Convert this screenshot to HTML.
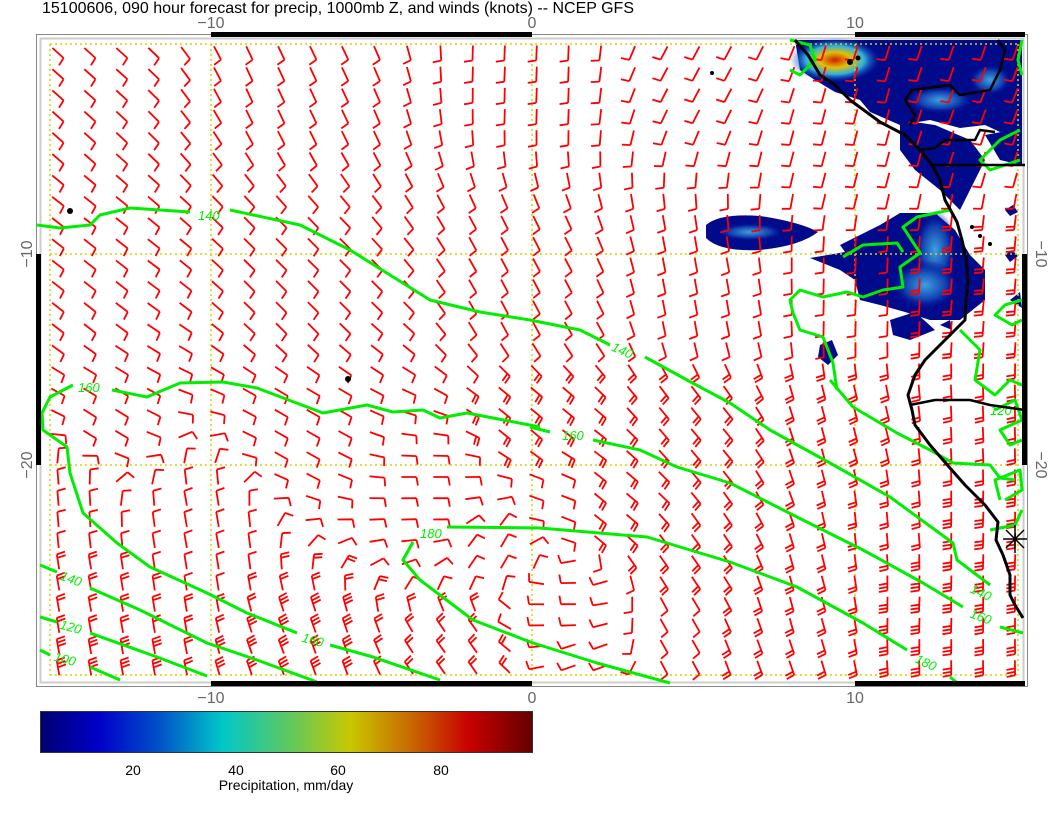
<!DOCTYPE html>
<html><head><meta charset="utf-8">
<style>
html,body{margin:0;padding:0;background:#fff;}
body{width:1056px;height:816px;overflow:hidden;position:relative;font-family:"Liberation Sans",sans-serif;}
svg{position:absolute;left:0;top:0;}
</style></head>
<body>
<svg id="s" width="1056" height="816" viewBox="0 0 1056 816" xmlns="http://www.w3.org/2000/svg">
<defs>
<linearGradient id="cb" x1="0" x2="1" y1="0" y2="0">
<stop offset="0" stop-color="#000070"/>
<stop offset="0.12" stop-color="#0000c8"/>
<stop offset="0.24" stop-color="#0050c8"/>
<stop offset="0.37" stop-color="#00c8c8"/>
<stop offset="0.5" stop-color="#5ac864"/>
<stop offset="0.63" stop-color="#c8c800"/>
<stop offset="0.76" stop-color="#c86400"/>
<stop offset="0.87" stop-color="#c80000"/>
<stop offset="1" stop-color="#640000"/>
</linearGradient>
<radialGradient id="hot" cx="0.5" cy="0.5" r="0.5">
<stop offset="0" stop-color="#d02000"/>
<stop offset="0.35" stop-color="#e0c000"/>
<stop offset="0.65" stop-color="#30b0e0"/>
<stop offset="1" stop-color="#1030b0" stop-opacity="0"/>
</radialGradient>
<radialGradient id="lb" cx="0.5" cy="0.5" r="0.5">
<stop offset="0" stop-color="#40a0e0"/>
<stop offset="0.6" stop-color="#1040b0"/>
<stop offset="1" stop-color="#000090" stop-opacity="0"/>
</radialGradient>
</defs>
<text x="42" y="13" font-size="16" fill="#000">15100606, 090 hour forecast for precip, 1000mb Z, and winds (knots) -- NCEP GFS</text>
<rect x="36.5" y="34.5" width="991" height="652" fill="none" stroke="#888" stroke-width="1"/>
<rect x="40.5" y="38.5" width="983" height="644" fill="none" stroke="#ccc" stroke-width="2"/>
<g id="precip">
<path d="M795 40 L1022 40 L1022 130 L1000 132 L985 125 L960 128 L930 120 L900 125 L870 112 L860 100 L835 92 L815 80 L800 70 Z" fill="#000a8a"/>
<path d="M900 120 L935 125 L970 140 L985 160 L975 180 L960 210 L940 190 L915 170 L900 150 Z" fill="#000a8a"/>
<path d="M985 135 L1022 128 L1022 165 L1000 160 Z" fill="#000a8a"/>
<ellipse cx="835" cy="60" rx="45" ry="22" fill="url(#hot)"/>
<ellipse cx="990" cy="80" rx="22" ry="16" fill="url(#lb)"/>
<ellipse cx="940" cy="100" rx="35" ry="14" fill="url(#lb)"/>
<path d="M706 225 Q720 213 760 216 Q800 222 818 232 Q800 246 760 250 Q720 252 706 238 Z" fill="#000a8a"/>
<ellipse cx="750" cy="232" rx="35" ry="9" fill="url(#lb)"/>
<path d="M840 245 L880 225 L900 213 L935 213 L955 230 L970 255 L985 270 L985 300 L960 320 L930 320 L905 312 L880 305 L860 300 L855 280 L840 270 L810 258 L845 252 Z" fill="#000a8a"/>
<ellipse cx="935" cy="250" rx="22" ry="40" fill="url(#lb)"/>
<ellipse cx="925" cy="285" rx="35" ry="25" fill="url(#lb)"/>
<path d="M890 320 L915 312 L935 330 L910 340 L893 335 Z" fill="#000a8a"/>
<path d="M820 345 L832 340 L838 355 L828 365 L818 357 Z" fill="#000a8a"/>
<path d="M1005 210 L1013 205 L1018 212 L1010 216 Z M1005 255 L1012 250 L1018 256 L1010 262 Z M1010 300 L1020 292 L1022 308 Z M940 325 L950 320 L952 330 Z" fill="#000a8a"/>
</g>
<g id="grid" stroke="#d8d000" stroke-width="1.5" stroke-dasharray="2,3" fill="none">
<path d="M50 44 H1018 M50 254 H1018 M50 465 H1018 M50 675 H1018 M50 44 V675 M211 44 V675 M532 44 V675 M855 44 V675 M1018 44 V675"/>
</g>
<g id="barbs" stroke="#ff0000" stroke-width="1.8" fill="none" stroke-linecap="butt"></g>
<g id="green" stroke="#00ee00" stroke-width="3" fill="none" stroke-linejoin="round">
<polyline points="37,225 60,228 90,225 100,215 130,208 190,212"/>
<polyline points="230,210 300,225 350,250 390,275 430,300 480,312 530,320 580,330 610,345"/>
<polyline points="645,357 687,380 730,403 770,430 830,463 890,497 953,543 957,560 990,585"/>
<polyline points="530,427 550,432"/>
<polyline points="593,440 640,450 677,467 730,483 797,517 863,550 923,583 963,607"/>
<polyline points="1000,627 1023,633"/>
<polyline points="447,527 540,528 647,537 730,562 797,587 863,623 907,650"/>
<polyline points="950,677 960,685"/>
<polyline points="413,542 403,560 420,580 473,620 533,643 597,663 670,683"/>
<polyline points="73,385 50,397 42,413 43,430 67,447 70,473 83,513 117,543 150,567 207,593 247,613 297,633"/>
<polyline points="330,645 373,657 440,680"/>
<polyline points="112,390 147,397 180,383 223,382 257,388 323,413 367,405 393,412 423,410 440,418 467,413 540,427"/>
<polyline points="40,565 57,572"/>
<polyline points="90,588 140,610 207,643 257,660 317,682"/>
<polyline points="40,617 57,622"/>
<polyline points="90,633 157,657 207,676"/>
<polyline points="40,650 50,655"/>
<polyline points="90,667 120,680"/>
<polyline points="830,380 853,407 897,433 930,450 953,463 990,465 1000,478 1015,480"/>
<polyline points="837,390 833,363 823,337 800,330 793,313 790,300 800,290 823,297 847,292 863,297 883,290 903,287 900,267 920,253 903,227 917,217 950,210"/>
<polyline points="843,257 863,245 897,243 903,252"/>
<polyline points="790,40 810,45 815,60 800,75 790,70"/>
<polyline points="1022,40 1018,60 1022,75"/>
<polyline points="1020,130 1000,140 980,160 990,170 1020,160"/>
<polyline points="960,330 980,350 975,380 995,395 1010,380 1022,385"/>
<polyline points="995,410 1015,400 1022,420 1000,430 1010,445 1022,440"/>
<polyline points="1000,500 995,480 1020,470 1022,490 1005,500"/>
<polyline points="990,530 1015,525 1022,510"/>
<polyline points="1022,300 1005,305 995,315 1012,325 1022,320"/>
</g>
<g fill="#00ee00" font-size="13" font-style="italic">
<text x="198" y="220">140</text>
<text x="612" y="356" transform="rotate(25 625 350)">140</text>
<text x="78" y="392">160</text>
<text x="562" y="440">160</text>
<text x="302" y="645" transform="rotate(15 315 640)">160</text>
<text x="420" y="538">180</text>
<text x="60" y="584" transform="rotate(20 73 580)">140</text>
<text x="60" y="632" transform="rotate(15 73 627)">120</text>
<text x="54" y="664" transform="rotate(15 67 660)">100</text>
<text x="970" y="598" transform="rotate(25 983 593)">140</text>
<text x="970" y="622" transform="rotate(20 983 617)">160</text>
<text x="915" y="668" transform="rotate(25 928 663)">180</text>
<text x="990" y="415">120</text>
</g>
<g id="coast" stroke="#000" stroke-width="3" fill="none" stroke-linejoin="round">
<polyline points="795,40 808,55 820,75 835,85 850,100 880,122 905,135 920,150 932,165 940,180 945,200 957,222 962,240 966,258 968,280 966,300 965,320 950,335 940,345 925,360 915,375 908,395 912,410 915,425 930,445 950,468 965,485 985,505 998,522 996,540 1003,555 1010,575 1010,595 1015,605 1023,618"/>
<polyline points="910,125 915,115 905,100 912,90 950,85 960,95 990,90 1000,70 1005,50 998,40" stroke-width="2.5"/>
<polyline points="920,150 935,148 945,140 975,140 980,130 995,132" stroke-width="2.5"/>
<polyline points="932,165 1025,165" stroke-width="2.5"/>
<polyline points="910,405 935,400 970,400 990,405 1025,410" stroke-width="2.5"/>
</g>
<g fill="#000"><circle cx="70" cy="211" r="3"/><circle cx="348" cy="379" r="3"/><circle cx="712" cy="73" r="2"/>
<circle cx="850" cy="62" r="3"/><circle cx="858" cy="58" r="2.5"/><circle cx="972" cy="227" r="2"/><circle cx="980" cy="236" r="2"/><circle cx="990" cy="244" r="2"/></g>
<g stroke="#000" stroke-width="1.5"><path d="M1015 525 V553 M1003 539 H1027 M1006 530 L1024 548 M1006 548 L1024 530"/></g>
<g fill="#000">
<rect x="211" y="32" width="321" height="5"/><rect x="855" y="32" width="170" height="5"/>
<rect x="211" y="681" width="321" height="5"/><rect x="855" y="681" width="170" height="5"/>
<rect x="36" y="254" width="5" height="211"/><rect x="1022" y="254" width="5" height="211"/>
</g>
<g fill="#666" font-size="16" text-anchor="middle">
<text x="211" y="28">−10</text><text x="532" y="28">0</text><text x="855" y="28">10</text>
<text x="211" y="703">−10</text><text x="532" y="703">0</text><text x="855" y="703">10</text>
<text transform="translate(32 254) rotate(-90)">−10</text>
<text transform="translate(32 465) rotate(-90)">−20</text>
<text transform="translate(1036 254) rotate(90)">−10</text>
<text transform="translate(1036 465) rotate(90)">−20</text>
</g>
<rect x="40.5" y="711.5" width="492" height="41" fill="url(#cb)" stroke="#333" stroke-width="1"/>
<g fill="#000" font-size="14" text-anchor="middle">
<text x="133" y="775">20</text><text x="236" y="775">40</text><text x="338" y="775">60</text><text x="441" y="775">80</text>
<text x="286" y="790">Precipitation, mm/day</text>
</g>
</svg>
<script>
(function(){
var C=[[70,60,42,1],[300,60,65,1],[530,60,92,1],[700,60,118,1],[850,150,105,1],[980,100,110,1],
[70,300,38,1],[300,300,45,1],[530,300,62,1],[700,300,80,1],[850,300,92,1],[980,300,95,2],
[100,420,32,1],[300,430,30,1],[530,430,40,2],[700,440,50,2],[850,440,75,2],[980,440,88,2],
[60,490,-95,1],[200,520,-100,1],[80,600,-100,2],[80,660,-100,3],[300,660,-110,3],[460,660,-125,2],
[440,500,0,1],[500,540,-60,1],[560,610,180,1],[580,660,160,1],[545,500,20,1],[620,500,40,2],
[700,560,55,2],[800,600,75,2],[920,600,92,3],[980,520,92,3],[900,520,85,2],[680,640,60,1],[760,660,70,2]];
var g=document.getElementById('barbs'),out='';
for(var j=0;j<30;j++){var y=53+j*21.2;
 for(var i=0;i<31;i++){var x=58+i*31.9;
  var sx=0,sy=0,sn=0,sw=0;
  for(var k=0;k<C.length;k++){var dx=x-C[k][0],dy=y-C[k][1];var w=1/Math.pow(dx*dx+dy*dy+300,2);
   var a=C[k][2]*Math.PI/180;sx+=w*Math.cos(a);sy+=w*Math.sin(a);sn+=w*C[k][3];sw+=w;}
  var ang=Math.atan2(sy,sx);var n=Math.max(1,Math.round(sn/sw));
  var dxu=Math.cos(ang),dyu=Math.sin(ang),px=-dyu,py=dxu;
  var x0=x-dxu*7.5,y0=y-dyu*7.5,x1=x+dxu*7.5,y1=y+dyu*7.5;
  var d='M'+x0.toFixed(1)+' '+y0.toFixed(1)+'L'+x1.toFixed(1)+' '+y1.toFixed(1);
  for(var b=0;b<n;b++){var bx=x1-dxu*b*3.5,by=y1-dyu*b*3.5;
   d+='M'+bx.toFixed(1)+' '+by.toFixed(1)+'L'+(bx+px*8.5+dxu*1.5).toFixed(1)+' '+(by+py*8.5+dyu*1.5).toFixed(1);}
  out+='<path d="'+d+'"/>';
 }}
g.innerHTML=out;
})();
</script>
</body></html>
